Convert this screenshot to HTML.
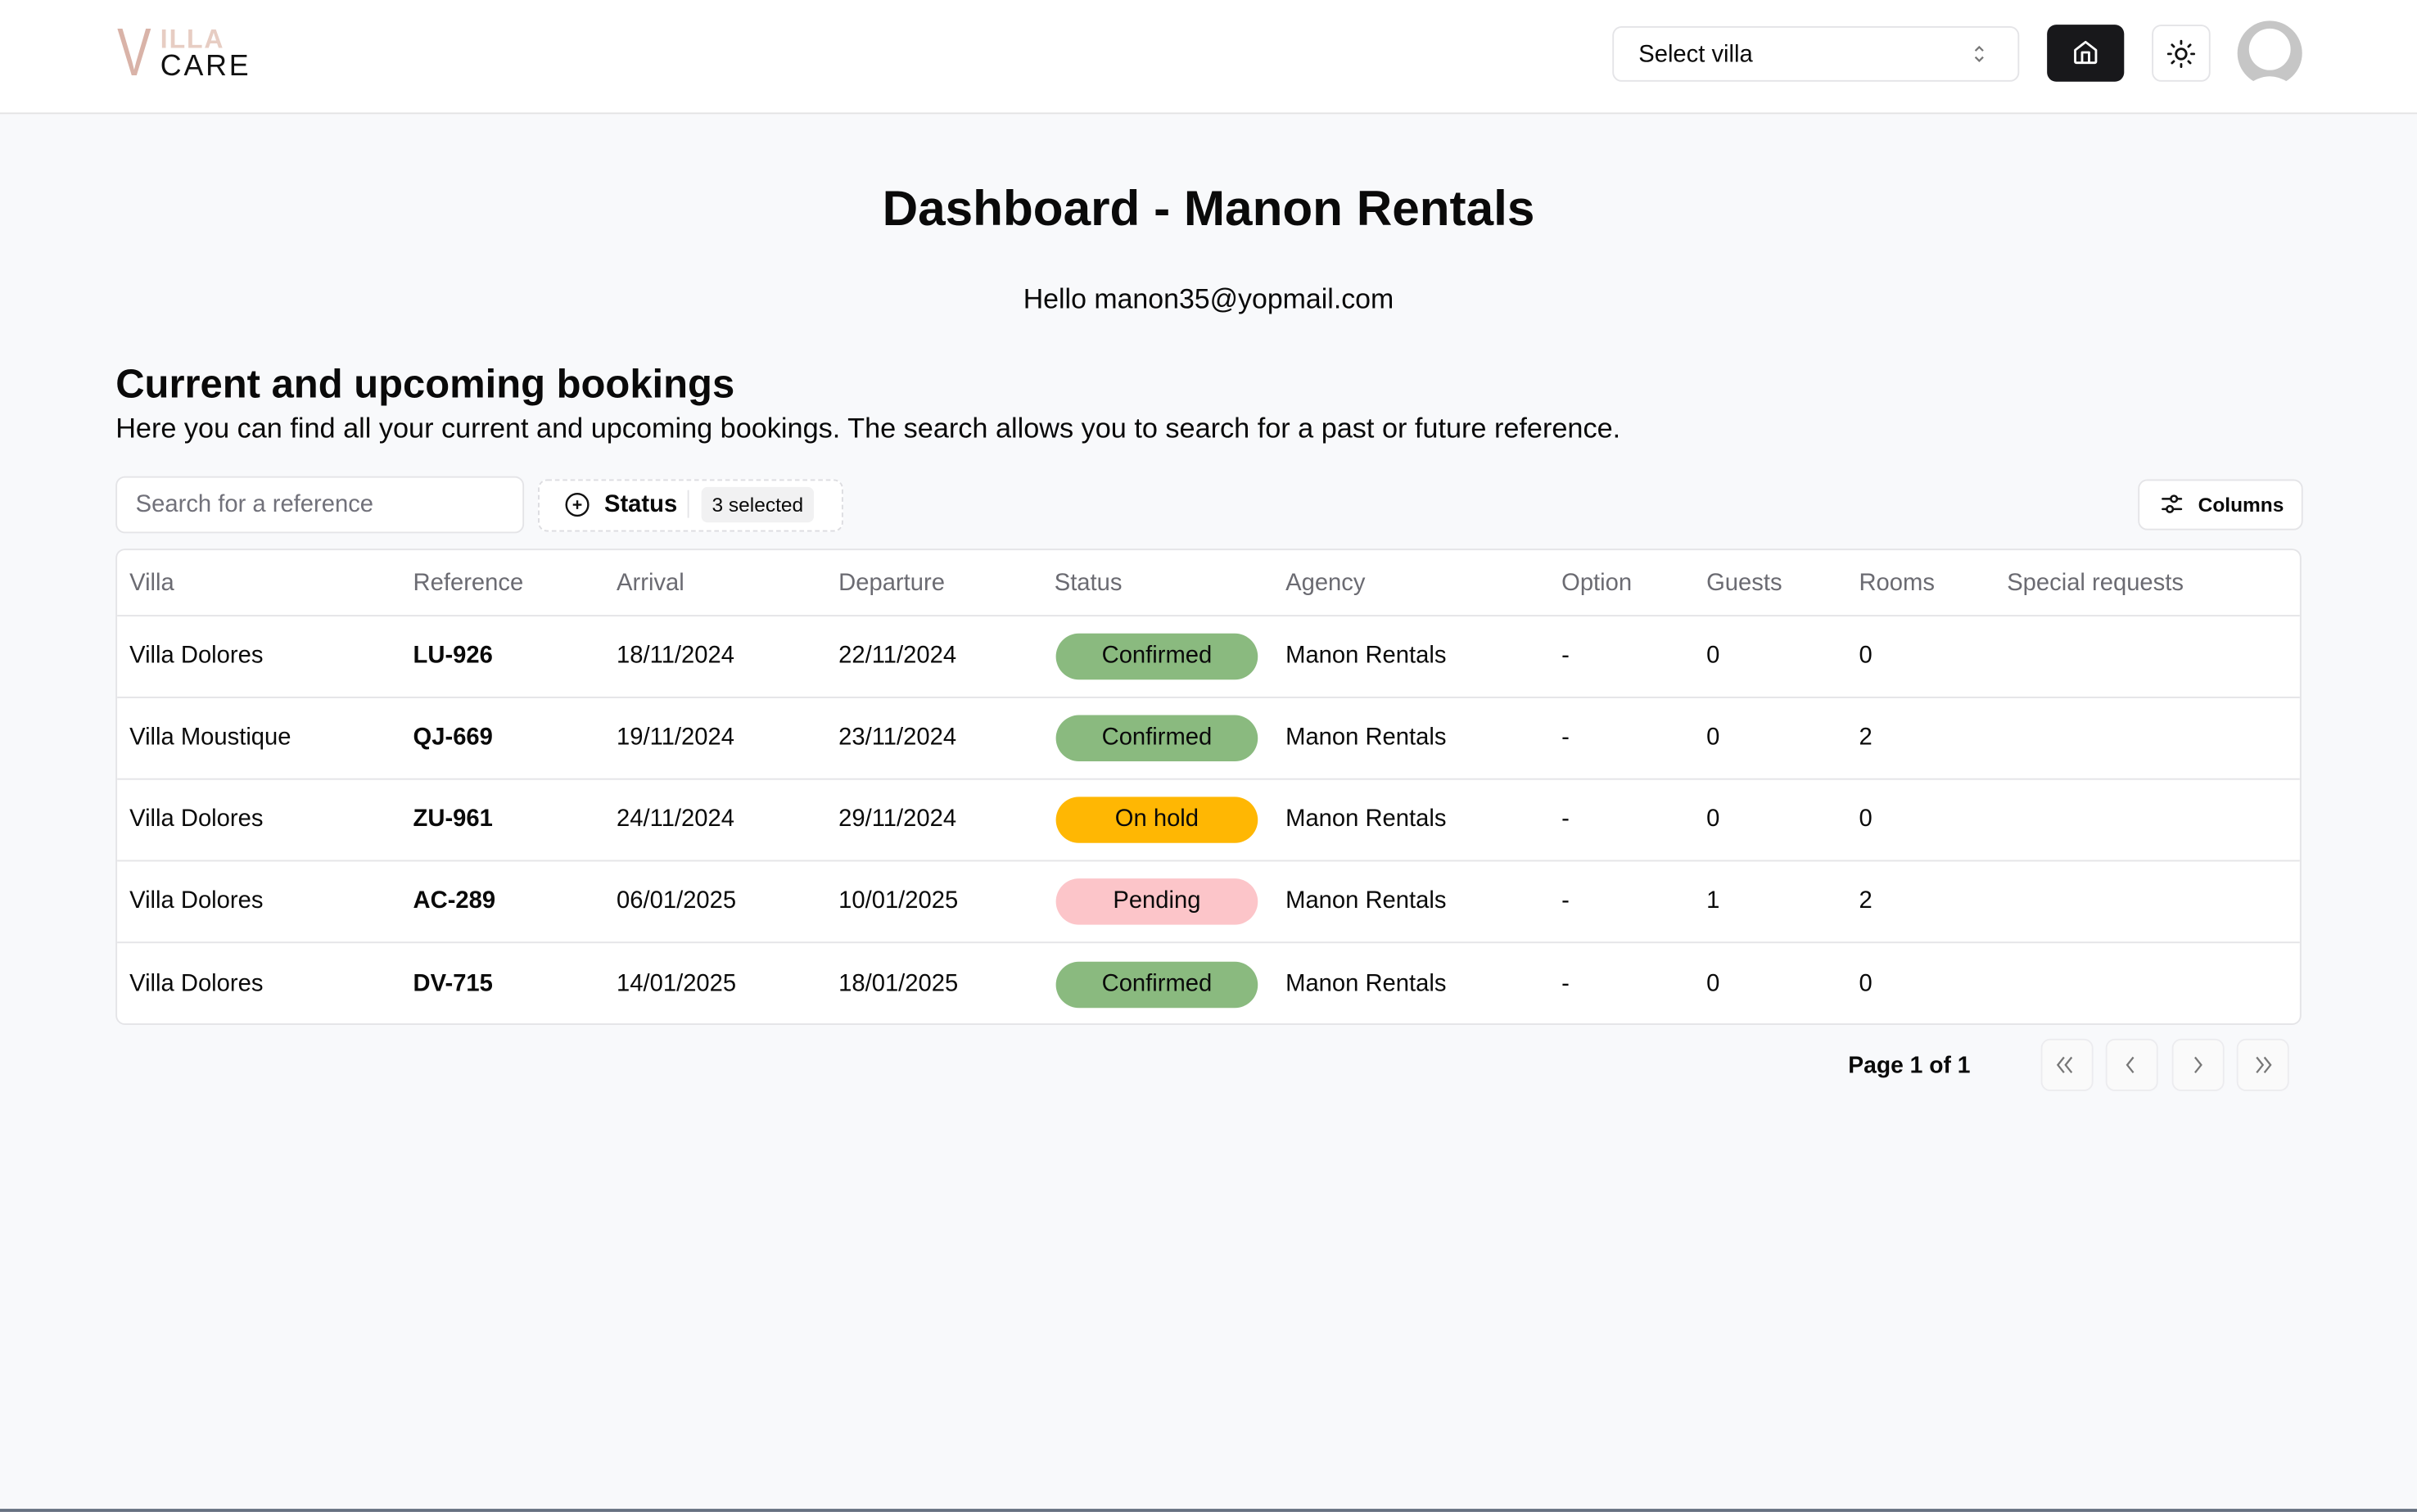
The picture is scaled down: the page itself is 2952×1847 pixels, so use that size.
<!DOCTYPE html>
<html><head><meta charset="utf-8">
<style>
*{box-sizing:border-box;margin:0;padding:0}
html,body{width:2952px;height:1846px;overflow:hidden;background:#f8f9fb;font-family:"Liberation Sans",Arial,sans-serif;color:#0a0a0a}
#s{position:absolute;left:0;top:0;width:1568px;height:981px;transform:scale(1.88265);transform-origin:0 0;background:#f8f9fb}
.a{position:absolute}
.hdr{left:0;top:0;width:1568px;height:74px;background:#fff;border-bottom:1px solid #e3e3e3}
.btn{background:#fff;border:1px solid #e4e4e7;border-radius:6px}
.tbl{left:75px;top:356px;width:1418px;height:309px;background:#fff;border:1px solid #e4e4e7;border-radius:6px;overflow:hidden}
.row{position:absolute;left:0;width:100%;border-top:1px solid #e4e4e7}
.c{position:absolute;font-size:15.5px;white-space:nowrap}
.h{color:#6b6b72}
.b{font-weight:bold}
.badge{position:absolute;left:609px;width:131px;height:30px;border-radius:15px;font-size:15.5px;text-align:center;line-height:30px}
.pg{width:34px;height:34px;top:674px;border:1px solid #ececef;border-radius:6px;background:#fafafa}
</style></head><body>
<div id="s">
<div class="a hdr"></div>
<div class="a" style="left:76px;top:13px;font-size:44px;color:#d9b3a8;line-height:44px;transform:scaleX(0.75);transform-origin:0 0">V</div>
<div class="a" style="left:104px;top:17px;font-size:17px;font-weight:bold;color:#e7cdc3;letter-spacing:1px;line-height:17px">ILLA</div>
<div class="a" style="left:104px;top:34px;font-size:19px;color:#111;letter-spacing:1.5px;line-height:19px">CARE</div>

<div class="a btn" style="left:1046px;top:17px;width:264px;height:36px"></div>
<div class="a" style="left:1063px;top:27px;font-size:15.5px">Select villa</div>
<svg class="a" style="left:1278px;top:28px" width="12" height="14" viewBox="0 0 12 14"><path d="M3.5 5L6 2.5 8.5 5M3.5 9L6 11.5 8.5 9" fill="none" stroke="#777" stroke-width="1.2"/></svg>
<div class="a" style="left:1328px;top:16px;width:50px;height:37px;background:#18181b;border-radius:6px"></div>
<svg class="a" style="left:1344px;top:25px" width="18" height="18" viewBox="0 0 24 24"><path d="M3 10l9-7 9 7v10a1 1 0 0 1-1 1H4a1 1 0 0 1-1-1z M9 21v-9h6v9" fill="none" stroke="#fff" stroke-width="2" stroke-linejoin="round"/></svg>
<div class="a btn" style="left:1396px;top:16px;width:38px;height:37px"></div>
<svg class="a" style="left:1405px;top:25px" width="20" height="20" viewBox="0 0 24 24" fill="none" stroke="#111" stroke-width="1.8" stroke-linecap="round"><circle cx="12" cy="12" r="4"/><path d="M12 2v2M12 20v2M4.9 4.9l1.4 1.4M17.7 17.7l1.4 1.4M2 12h2M20 12h2M4.9 19.1l1.4-1.4M17.7 6.3l1.4-1.4"/></svg>
<svg class="a" style="left:1451px;top:13px" width="43" height="43" viewBox="0 0 43 43"><circle cx="21.5" cy="21.5" r="21" fill="#c6c6c6"/><circle cx="21.5" cy="19" r="13.5" fill="#fff"/><path d="M6 43 Q21.5 30 37 43Z" fill="#fff"/></svg>

<div class="a" style="left:0;width:1568px;top:117px;text-align:center;font-size:32px;font-weight:bold">Dashboard - Manon Rentals</div>
<div class="a" style="left:0;width:1568px;top:184px;text-align:center;font-size:18px">Hello manon35@yopmail.com</div>
<div class="a" style="left:75px;top:234px;font-size:26px;font-weight:bold">Current and upcoming bookings</div>
<div class="a" style="left:75px;top:268px;font-size:18.2px">Here you can find all your current and upcoming bookings. The search allows you to search for a past or future reference.</div>

<div class="a btn" style="left:75px;top:309px;width:265px;height:37px"></div>
<div class="a" style="left:88px;top:319px;font-size:15.5px;color:#71717a">Search for a reference</div>
<div class="a" style="left:349px;top:311px;width:198px;height:34px;border:1px dashed #dcdce0;border-radius:6px;background:#fff"></div>
<svg class="a" style="left:366px;top:319px" width="17" height="17" viewBox="0 0 24 24" fill="none" stroke="#111" stroke-width="1.8"><circle cx="12" cy="12" r="10"/><path d="M12 8v8M8 12h8"/></svg>
<div class="a" style="left:392px;top:319px;font-size:15.5px;font-weight:bold">Status</div>
<div class="a" style="left:446px;top:318px;width:1px;height:18px;background:#e4e4e7"></div>
<div class="a" style="left:455px;top:316px;width:73px;height:23px;background:#f1f1f2;border-radius:4px;font-size:13px;line-height:23px;text-align:center">3 selected</div>
<div class="a btn" style="left:1387px;top:311px;width:107px;height:33px"></div>
<svg class="a" style="left:1401px;top:319px" width="16" height="16" viewBox="0 0 24 24" fill="none" stroke="#111" stroke-width="2" stroke-linecap="round"><path d="M3 7h8M17 7h4M3 17h4M13 17h8"/><circle cx="14" cy="7" r="3"/><circle cx="10" cy="17" r="3"/></svg>
<div class="a" style="left:1426px;top:320px;font-size:13px;font-weight:bold">Columns</div>

<div class="a tbl">
<div class="c h" style="left:8px;top:13px">Villa</div>
<div class="c h" style="left:192px;top:13px">Reference</div>
<div class="c h" style="left:324px;top:13px">Arrival</div>
<div class="c h" style="left:468px;top:13px">Departure</div>
<div class="c h" style="left:608px;top:13px">Status</div>
<div class="c h" style="left:758px;top:13px">Agency</div>
<div class="c h" style="left:937px;top:13px">Option</div>
<div class="c h" style="left:1031px;top:13px">Guests</div>
<div class="c h" style="left:1130px;top:13px">Rooms</div>
<div class="c h" style="left:1226px;top:13px">Special requests</div>

<div class="row" style="top:42px;height:53px">
<div class="c" style="left:8px;top:17px">Villa Dolores</div><div class="c b" style="left:192px;top:17px">LU-926</div><div class="c" style="left:324px;top:17px">18/11/2024</div><div class="c" style="left:468px;top:17px">22/11/2024</div><div class="badge" style="top:11px;background:#8aba7f">Confirmed</div><div class="c" style="left:758px;top:17px">Manon Rentals</div><div class="c" style="left:937px;top:17px">-</div><div class="c" style="left:1031px;top:17px">0</div><div class="c" style="left:1130px;top:17px">0</div></div>
<div class="row" style="top:95px;height:53px">
<div class="c" style="left:8px;top:17px">Villa Moustique</div><div class="c b" style="left:192px;top:17px">QJ-669</div><div class="c" style="left:324px;top:17px">19/11/2024</div><div class="c" style="left:468px;top:17px">23/11/2024</div><div class="badge" style="top:11px;background:#8aba7f">Confirmed</div><div class="c" style="left:758px;top:17px">Manon Rentals</div><div class="c" style="left:937px;top:17px">-</div><div class="c" style="left:1031px;top:17px">0</div><div class="c" style="left:1130px;top:17px">2</div></div>
<div class="row" style="top:148px;height:53px">
<div class="c" style="left:8px;top:17px">Villa Dolores</div><div class="c b" style="left:192px;top:17px">ZU-961</div><div class="c" style="left:324px;top:17px">24/11/2024</div><div class="c" style="left:468px;top:17px">29/11/2024</div><div class="badge" style="top:11px;background:#ffb703">On hold</div><div class="c" style="left:758px;top:17px">Manon Rentals</div><div class="c" style="left:937px;top:17px">-</div><div class="c" style="left:1031px;top:17px">0</div><div class="c" style="left:1130px;top:17px">0</div></div>
<div class="row" style="top:201px;height:53px">
<div class="c" style="left:8px;top:17px">Villa Dolores</div><div class="c b" style="left:192px;top:17px">AC-289</div><div class="c" style="left:324px;top:17px">06/01/2025</div><div class="c" style="left:468px;top:17px">10/01/2025</div><div class="badge" style="top:11px;background:#fcc5c9">Pending</div><div class="c" style="left:758px;top:17px">Manon Rentals</div><div class="c" style="left:937px;top:17px">-</div><div class="c" style="left:1031px;top:17px">1</div><div class="c" style="left:1130px;top:17px">2</div></div>
<div class="row" style="top:254px;height:54px">
<div class="c" style="left:8px;top:18px">Villa Dolores</div><div class="c b" style="left:192px;top:18px">DV-715</div><div class="c" style="left:324px;top:18px">14/01/2025</div><div class="c" style="left:468px;top:18px">18/01/2025</div><div class="badge" style="top:12px;background:#8aba7f">Confirmed</div><div class="c" style="left:758px;top:18px">Manon Rentals</div><div class="c" style="left:937px;top:18px">-</div><div class="c" style="left:1031px;top:18px">0</div><div class="c" style="left:1130px;top:18px">0</div></div>
</div>

<div class="a" style="left:1199px;top:683px;font-size:15px;font-weight:bold">Page 1 of 1</div>
<div class="a pg" style="left:1324px"></div><div class="a pg" style="left:1366px"></div><div class="a pg" style="left:1409px"></div><div class="a pg" style="left:1451px"></div>
<svg class="a" style="left:1324px;top:674px" width="170" height="34" viewBox="0 0 170 34" fill="none" stroke="#777" stroke-width="1.2"><path d="M15 12l-4 5 4 5M20 12l-4 5 4 5M60 12l-4 5 4 5M100 12l4 5-4 5M140 12l4 5-4 5M145 12l4 5-4 5"/></svg>
<div class="a" style="left:0;top:979px;width:1568px;height:2px;background:#667080"></div>
</div>
</body></html>
